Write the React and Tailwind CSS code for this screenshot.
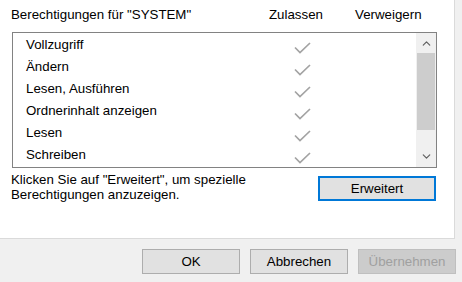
import { ChevronUp, ChevronDown } from "lucide-react";

const rights = [
  "Vollzugriff",
  "Ändern",
  "Lesen, Ausführen",
  "Ordnerinhalt anzeigen",
  "Lesen",
  "Schreiben",
];

const Check = () => (
  <svg width="17" height="22" viewBox="0 0 17 22" className="shrink-0">
    <path d="M1 14.5 L6 19.5 L16 10" fill="none" stroke="#a3a3a3" strokeWidth="1.7" />
  </svg>
);

const Button = ({ children, disabled }) => (
  <button
    disabled={disabled}
    className={
      disabled
        ? "w-[98px] h-[25px] bg-[#cccccc] border border-[#bfbfbf] text-[#a0a0a0]"
        : "w-[98px] h-[25px] bg-[#e1e1e1] border border-[#adadad] text-black"
    }
  >
    {children}
  </button>
);

const App = () => {
  return (
    <div className="w-[462px] h-[282px] bg-[#f0f0f0] overflow-hidden font-['Liberation_Sans',Arial,sans-serif] text-[13.3px] text-black">
      <div className="w-[455px] h-[239px] bg-white border-r border-b border-[#dadada] pl-[11px] pt-[7px]">
        {/* header */}
        <div className="flex leading-[16px]">
          <span className="w-[258px]">Berechtigungen für "SYSTEM"</span>
          <span className="w-[86px]">Zulassen</span>
          <span>Verweigern</span>
        </div>

        {/* permission list */}
        <div className="ml-px mt-[9px] w-[425px] h-[136px] border border-[#828282] flex">
          <div className="flex-1 pl-[13px]">
            {rights.map((r) => (
              <div key={r} className="h-[22px] flex items-center leading-[16px]">
                <span className="w-[268px] pt-px">{r}</span>
                <Check />
              </div>
            ))}
          </div>
          <div className="w-[20px] bg-[#f0f0f0] flex flex-col">
            <div className="h-[17px] flex items-center justify-center text-[#606060]">
              <ChevronUp size={13} strokeWidth={2.2} className="mt-[4px]" />
            </div>
            <div className="flex-1 px-px">
              <div className="mt-[3px] h-[77px] bg-[#cdcdcd]" />
            </div>
            <div className="h-[17px] flex items-center justify-center text-[#606060]">
              <ChevronDown size={13} strokeWidth={2.2} className="-mt-[4px]" />
            </div>
          </div>
        </div>

        {/* advanced */}
        <div className="flex justify-between w-[425px]">
          <p className="mt-[4px] leading-[15px]">
            Klicken Sie auf "Erweitert", um spezielle
            <br />
            Berechtigungen anzuzeigen.
          </p>
          <button className="mt-[8px] w-[118px] h-[25px] bg-[#e1e1e1] border-2 border-[#0078d7]">
            Erweitert
          </button>
        </div>
      </div>

      <div className="flex justify-end gap-[10px] pr-[6px] pt-[10px]">
        <Button>OK</Button>
        <Button>Abbrechen</Button>
        <Button disabled>Übernehmen</Button>
      </div>
    </div>
  );
};

export default App;
